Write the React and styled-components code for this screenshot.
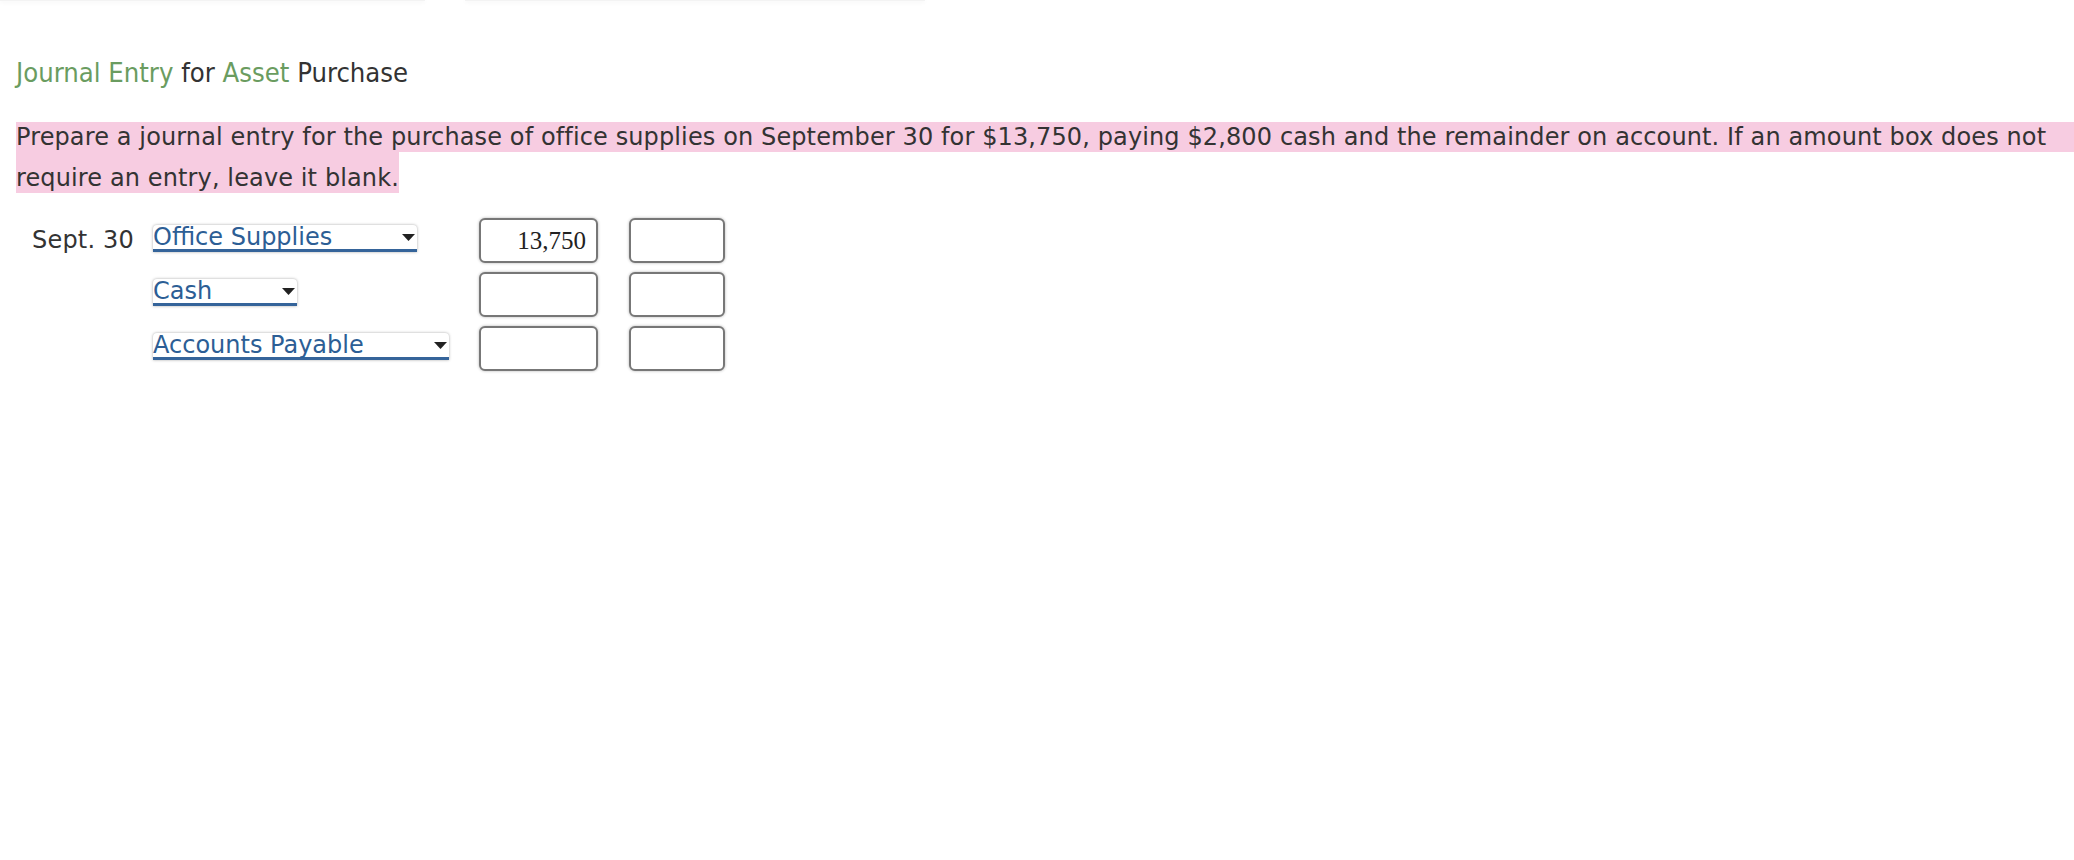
import React from 'react'
import styled, { createGlobalStyle } from 'styled-components'

const GlobalStyle = createGlobalStyle`
html, body {
    margin: 0;
    padding: 0;
    background: #ffffff;
}
body {
    font-family: 'DejaVu Sans', Verdana, sans-serif;
    color: #333333;
}
`

const Page = styled.div`
width: 100%;
min-height: 860px;
overflow: hidden;
`

const TopTabs = styled.div`
display: flex;
gap: 40px;
height: 1px;
`

const TabEdge = styled.div`
width: ${props => props.w}px;
height: 1px;
background: #f3f3f3;
box-shadow: 0 1px 4px rgba(0, 0, 0, 0.1);
`

const Heading = styled.h3`
margin: 57px 0 0 16px;
font-family: 'DejaVu Sans Condensed', 'DejaVu Sans', Tahoma, sans-serif;
font-size: 27.2px;
line-height: 30px;
font-weight: normal;
color: #333333;
`

const Term = styled.span`
color: #6a9c60;
`

const Prompt = styled.div`
display: flex;
flex-direction: column;
align-items: flex-start;
margin-top: 34px;
padding-left: 16px;
font-size: 24px;
letter-spacing: 0.12px;
color: #333333;
`

const FirstLine = styled.div`
align-self: stretch;
height: 30px;
line-height: 30px;
background: #f7cce1;
white-space: nowrap;
`

const SecondLine = styled.div`
height: 29px;
padding-top: 12px;
line-height: 29px;
background: #f7cce1;
white-space: nowrap;
`

const Entry = styled.div`
display: flex;
flex-direction: column;
gap: 9px;
margin-top: 25px;
padding-left: 32px;
`

const Row = styled.div`
display: flex;
align-items: flex-start;
height: 45px;
`

const DateCell = styled.div`
width: 121px;
font-size: 24px;
letter-spacing: 0.2px;
line-height: 45px;
color: #333333;
white-space: nowrap;
`

const AccountCell = styled.div`
width: 326px;
padding-top: 7px;
`

const Dropdown = styled.div`
display: flex;
align-items: center;
justify-content: space-between;
width: ${props => props.w}px;
height: 24px;
background: #ffffff;
border-radius: 4px 4px 0 0;
border-bottom: 3px solid #35649a;
box-shadow: 0 0 3px rgba(0, 0, 0, 0.35);
`

const DropdownText = styled.span`
font-size: 24px;
line-height: 24px;
color: #2c5e95;
white-space: nowrap;
`

const Caret = styled.svg`
width: 13px;
height: 7px;
margin-right: 2px;
flex-shrink: 0;
`

const Amount = styled.input`
box-sizing: border-box;
width: ${props => props.w}px;
height: 45px;
margin-right: ${props => props.gapRight || 0}px;
padding: 0 10px;
border: 2px solid #777777;
border-radius: 6px;
box-shadow: 0 0 3px rgba(0, 0, 0, 0.3);
background: #ffffff;
font-family: 'Liberation Serif', 'Times New Roman', serif;
font-size: 25px;
color: #222222;
text-align: right;
outline: none;
`

const rows = [
    { date: 'Sept. 30', account: 'Office Supplies', width: 264, debit: '13,750', credit: '' },
    { date: '', account: 'Cash', width: 144, debit: '', credit: '' },
    { date: '', account: 'Accounts Payable', width: 296, debit: '', credit: '' },
]

function AccountSelect({ label, width }) {
    return (
        <Dropdown w={width}>
            <DropdownText>{label}</DropdownText>
            <Caret viewBox="0 0 13 7">
                <path d="M0 0 L13 0 L6.5 7 Z" fill="#222222" />
            </Caret>
        </Dropdown>
    )
}

export default function App() {
    return (
        <Page>
            <GlobalStyle />
            <TopTabs>
                <TabEdge w={425} />
                <TabEdge w={460} />
            </TopTabs>
            <Heading>
                <Term>Journal Entry</Term> for <Term>Asset</Term> Purchase
            </Heading>
            <Prompt>
                <FirstLine>
                    Prepare a journal entry for the purchase of office supplies on September 30 for $13,750, paying $2,800 cash and the remainder on account. If an amount box does not
                </FirstLine>
                <SecondLine>require an entry, leave it blank.</SecondLine>
            </Prompt>
            <Entry>
                {rows.map((r, i) => (
                    <Row key={i}>
                        <DateCell>{r.date}</DateCell>
                        <AccountCell>
                            <AccountSelect label={r.account} width={r.width} />
                        </AccountCell>
                        <Amount w={119} gapRight={31} defaultValue={r.debit} readOnly />
                        <Amount w={96} defaultValue={r.credit} readOnly />
                    </Row>
                ))}
            </Entry>
        </Page>
    )
}
